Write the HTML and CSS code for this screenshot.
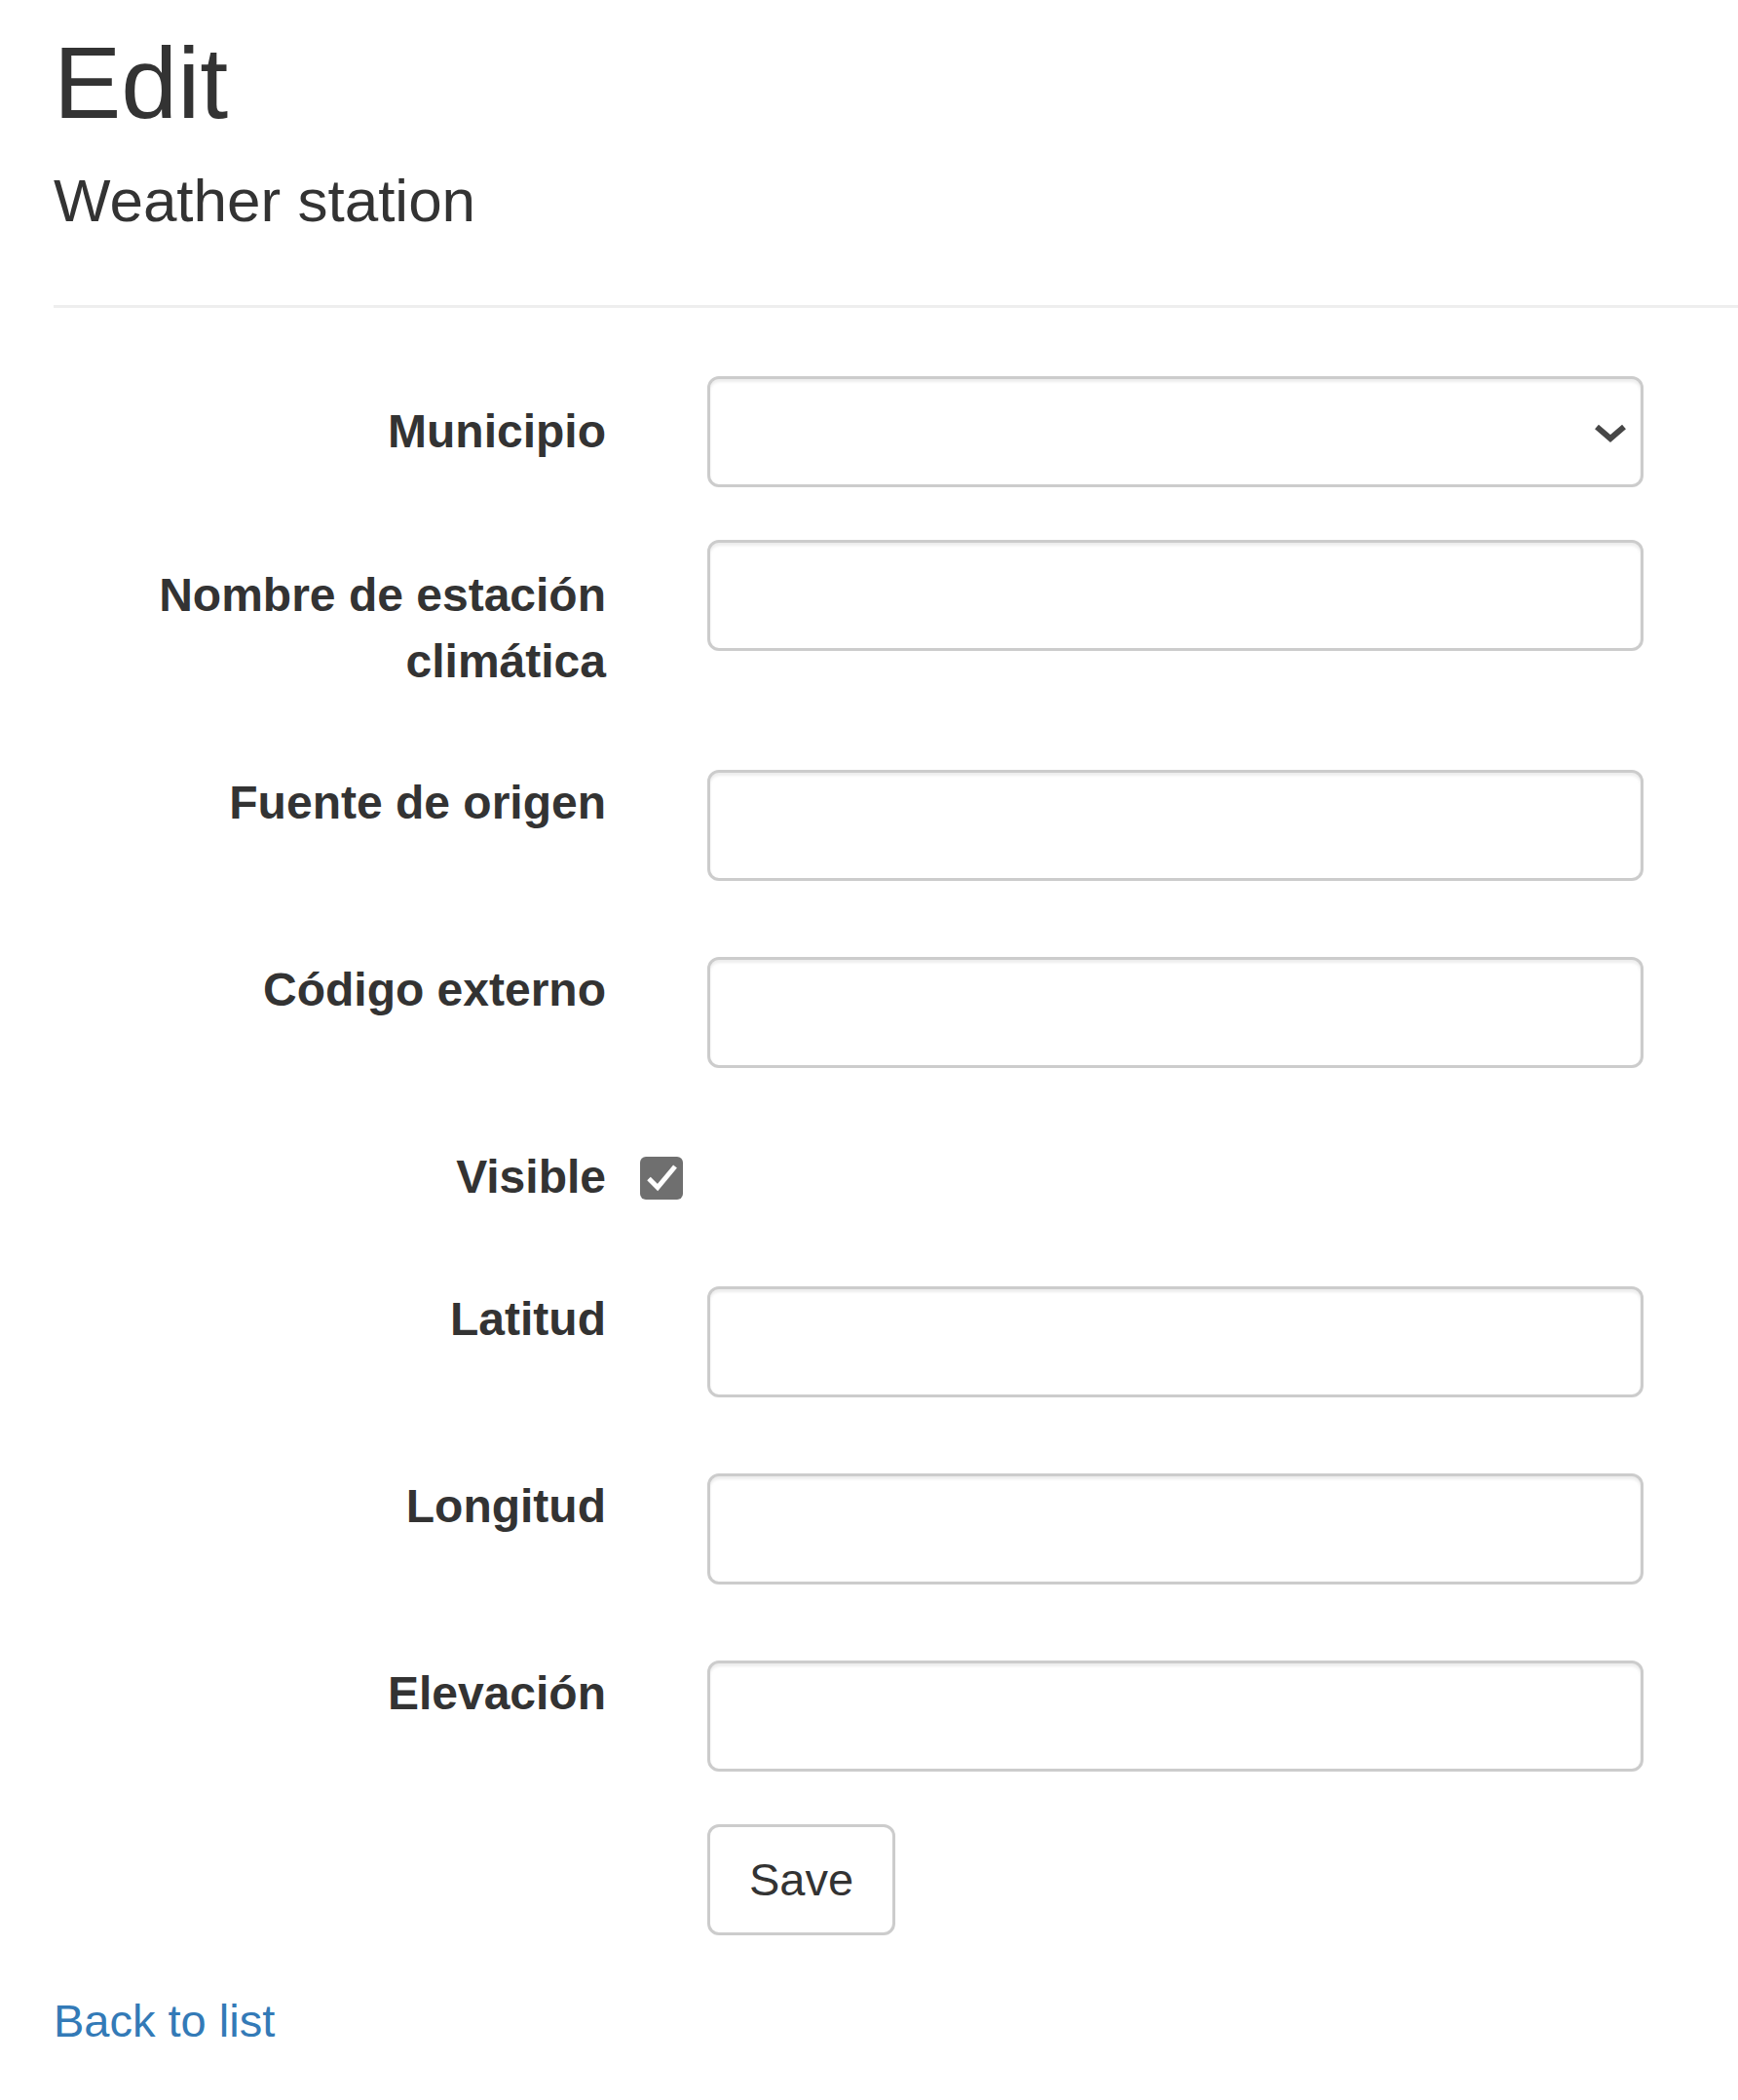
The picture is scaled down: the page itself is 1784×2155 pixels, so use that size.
FILE: index.html
```html
<!DOCTYPE html>
<html lang="es">
<head>
<meta charset="utf-8">
<title>Edit - Weather station</title>
<link rel="stylesheet" href="styles.css">
</head>
<body>
<div class="page">
  <h2 class="title">Edit</h2>
  <h4 class="subtitle">Weather station</h4>
  <hr class="divider">

  <form class="form">
    <div class="form-group">
      <label class="control-label padded" for="municipio">Municipio</label>
      <div class="field">
        <div class="select-wrap">
          <select id="municipio" class="form-control select"><option></option></select>
          <svg class="chevron" width="36" height="24" viewBox="0 0 36 24" aria-hidden="true"><path d="M4 7 L18 19 L32 7" fill="none" stroke="#474747" stroke-width="6"/></svg>
        </div>
      </div>
    </div>

    <div class="form-group">
      <label class="control-label padded" for="nombre">Nombre de estación climática</label>
      <div class="field">
        <input id="nombre" class="form-control" type="text">
        <span class="field-validation"></span>
      </div>
    </div>

    <div class="form-group">
      <label class="control-label" for="fuente">Fuente de origen</label>
      <div class="field">
        <input id="fuente" class="form-control" type="text">
        <span class="field-validation"></span>
      </div>
    </div>

    <div class="form-group">
      <label class="control-label" for="codigo">Código externo</label>
      <div class="field">
        <input id="codigo" class="form-control" type="text">
        <span class="field-validation"></span>
      </div>
    </div>

    <div class="form-group">
      <label class="control-label" for="visible">Visible</label>
      <div class="field">
        <div class="check-line">
          <span class="check-box" id="visible" role="checkbox" aria-checked="true">
            <svg width="44" height="44" viewBox="0 0 44 44" aria-hidden="true"><path d="M9 22.5 L18 31.5 L36 10" fill="none" stroke="#ffffff" stroke-width="5"/></svg>
          </span>
        </div>
        <span class="field-validation"></span>
      </div>
    </div>

    <div class="form-group">
      <label class="control-label" for="latitud">Latitud</label>
      <div class="field">
        <input id="latitud" class="form-control" type="text">
        <span class="field-validation"></span>
      </div>
    </div>

    <div class="form-group">
      <label class="control-label" for="longitud">Longitud</label>
      <div class="field">
        <input id="longitud" class="form-control" type="text">
        <span class="field-validation"></span>
      </div>
    </div>

    <div class="form-group">
      <label class="control-label" for="elevacion">Elevación</label>
      <div class="field">
        <input id="elevacion" class="form-control" type="text">
      </div>
    </div>

    <div class="form-group">
      <div class="field offset">
        <button type="button" class="btn">Save</button>
      </div>
    </div>
  </form>

  <div class="back">
    <a class="back-link" href="#">Back to list</a>
  </div>
</div>
</body>
</html>
```

FILE: styles.css
```css
html, body {
  margin: 0;
  padding: 0;
  background: #ffffff;
}

body {
  font-family: "Liberation Sans", Arial, Helvetica, sans-serif;
  font-size: 47px;
  line-height: 68px;
  color: #333333;
}

.page {
  padding-left: 55px;
}

.title {
  margin: 28px 0 0;
  font-size: 104px;
  font-weight: normal;
  line-height: 1.1;
  color: #333333;
}

.subtitle {
  margin: 30px 0 0;
  font-size: 62px;
  font-weight: normal;
  line-height: 1.1;
  color: #333333;
}

.divider {
  margin: 72px 0 0;
  border: 0;
  border-top: 3px solid #eeeeee;
  height: 0;
}

.form {
  margin-top: 70px;
}

.form-group {
  display: flex;
  align-items: flex-start;
  margin-bottom: 54px;
}

.control-label {
  flex: 0 0 567px;
  box-sizing: border-box;
  padding-top: 0;
  text-align: right;
  font-size: 48px;
  font-weight: bold;
  color: #333333;
}

.control-label.padded {
  padding-top: 23px;
  margin-bottom: 23px;
}

.field {
  margin-left: 104px;
  display: flex;
  flex-direction: column;
}

.field.offset {
  margin-left: 671px;
}

.form-control {
  display: block;
  box-sizing: border-box;
  width: 961px;
  height: 114px;
  margin: 0;
  padding: 0 40px;
  font: inherit;
  color: #555555;
  background: #ffffff;
  border: 3px solid #cccccc;
  border-radius: 12px;
  box-shadow: inset 0 3px 3px rgba(0, 0, 0, 0.075);
  outline: none;
}

.select-wrap {
  position: relative;
  width: 961px;
}

.select {
  appearance: none;
  -webkit-appearance: none;
}

.chevron {
  position: absolute;
  right: 16px;
  top: 50%;
  transform: translateY(-50%);
  pointer-events: none;
}

.field-validation {
  display: block;
  height: 24px;
}

.check-line {
  height: 68px;
}

.check-box {
  display: block;
  width: 44px;
  height: 44px;
  margin-top: 13px;
  margin-left: -69px;
  background: #6f6f6f;
  border-radius: 6px;
}

.check-box svg {
  display: block;
}

.btn {
  box-sizing: border-box;
  height: 114px;
  padding: 0 40px;
  margin: 0;
  font: inherit;
  color: #333333;
  background: #ffffff;
  border: 3px solid #cccccc;
  border-radius: 12px;
  cursor: pointer;
}

.back {
  margin-top: 6px;
}

.back-link {
  color: #337ab7;
  text-decoration: none;
}
```
